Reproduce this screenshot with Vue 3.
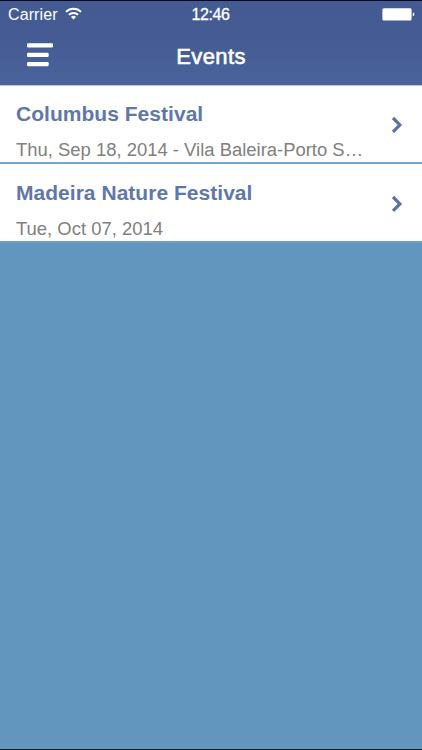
<script setup>
const events = [
  { title: 'Columbus Festival', detail: 'Thu, Sep 18, 2014 - Vila Baleira-Porto S…' },
  { title: 'Madeira Nature Festival', detail: 'Tue, Oct 07, 2014' },
]
</script>

<template>
  <div class="screen">
    <header class="header">
      <div class="status">
        <div class="carrier">
          <span>Carrier</span>
          <svg class="wifi" width="17" height="13" viewBox="0 0 17 13" fill="none" stroke="#fff" stroke-width="2">
            <path d="M1 4.9a10.6 10.6 0 0 1 15 0M3.9 7.8a6.5 6.5 0 0 1 9.2 0" />
            <path d="M8.5 12.4 5.9 9.9a3.8 3.8 0 0 1 5.2 0Z" fill="#fff" stroke="none" />
          </svg>
        </div>
        <div class="time">12:46</div>
        <svg class="battery" width="34" height="13" viewBox="0 0 34 13" fill="#fff">
          <rect x="0.4" y="0.2" width="29.2" height="12.4" rx="1.5" />
          <path d="M30.8 4.4Q32.3 4.5 32.3 6.3T30.8 8.2Z" />
        </svg>
      </div>
      <div class="navbar">
        <button class="menu" aria-label="Menu">
          <svg width="27" height="24" viewBox="0 0 27 24" fill="#fff">
            <rect x="0" y="0.2" width="26" height="4.2" rx="1.2" />
            <rect x="0" y="9.7" width="21.7" height="4.2" rx="1.2" />
            <rect x="0" y="19" width="21.7" height="4.2" rx="1.2" />
          </svg>
        </button>
        <h1>Events</h1>
      </div>
    </header>
    <ul class="events">
      <li v-for="event in events" :key="event.title">
        <div class="text">
          <h2>{{ event.title }}</h2>
          <p>{{ event.detail }}</p>
        </div>
        <svg class="chevron" width="12" height="18" viewBox="0 0 12 18" fill="none" stroke="#5b74a8" stroke-width="3.2">
          <path d="m2 2 6.9 6.9L2 15.8" />
        </svg>
      </li>
    </ul>
  </div>
</template>

<style>
body { margin: 0; background: #6296be; }
</style>

<style scoped>
.screen {
  box-sizing: border-box;
  height: 750px;
  background: #6296be;
  border-top: 1px solid #050a20;
  border-bottom: 1px solid #101c28;
  font-family: "Liberation Sans", Arial, sans-serif;
  overflow: hidden;
}
.header {
  box-sizing: border-box;
  height: 84px;
  color: #fff;
  background: linear-gradient(#435a93, #445b94 45%, #4b639b);
}
.status {
  display: grid;
  grid-template-columns: 1fr auto 1fr;
  height: 28px;
  padding: 0 6px 0 8px;
  align-items: center;
  font-size: 16px;
}
.carrier { display: flex; align-items: center; gap: 7px; letter-spacing: 0.1px; }
.wifi { margin-top: -4px; }
.time { margin-right: 3px; -webkit-text-stroke: 0.3px #fff; letter-spacing: -0.4px; }
.battery { justify-self: end; margin-top: -2px; }
.navbar {
  display: grid;
  grid-template-columns: 60px 1fr 60px;
  height: 56px;
  align-items: center;
}
.menu {
  display: flex;
  padding: 0 0 5px 27px;
  border: 0;
  background: none;
}
h1 {
  margin: 0;
  text-align: center;
  font-size: 22px;
  font-weight: 400;
  letter-spacing: 0.4px;
  -webkit-text-stroke: 0.6px #fff;
}
.events { margin: 0; padding: 0; list-style: none; }
li {
  box-sizing: border-box;
  display: flex;
  height: 79px;
  justify-content: space-between;
  padding: 0 19px 0 16px;
  background: #fff;
  border-top: 1px solid #bcc5e2;
  border-bottom: 2px solid #76a5cc;
}
li:last-child { border-top-color: #fff; border-bottom-color: #6fa0c0; }
.text { width: 350px; padding-top: 16px; }
h2 { margin: 0; font-size: 21px; line-height: 24px; letter-spacing: 0.03px; color: #5f77a9; }
p {
  margin: 13px 0 0;
  font-size: 18.45px;
  line-height: 22px;
  color: #808080;
  white-space: nowrap;
}
.chevron { margin-top: 30px; }
</style>
